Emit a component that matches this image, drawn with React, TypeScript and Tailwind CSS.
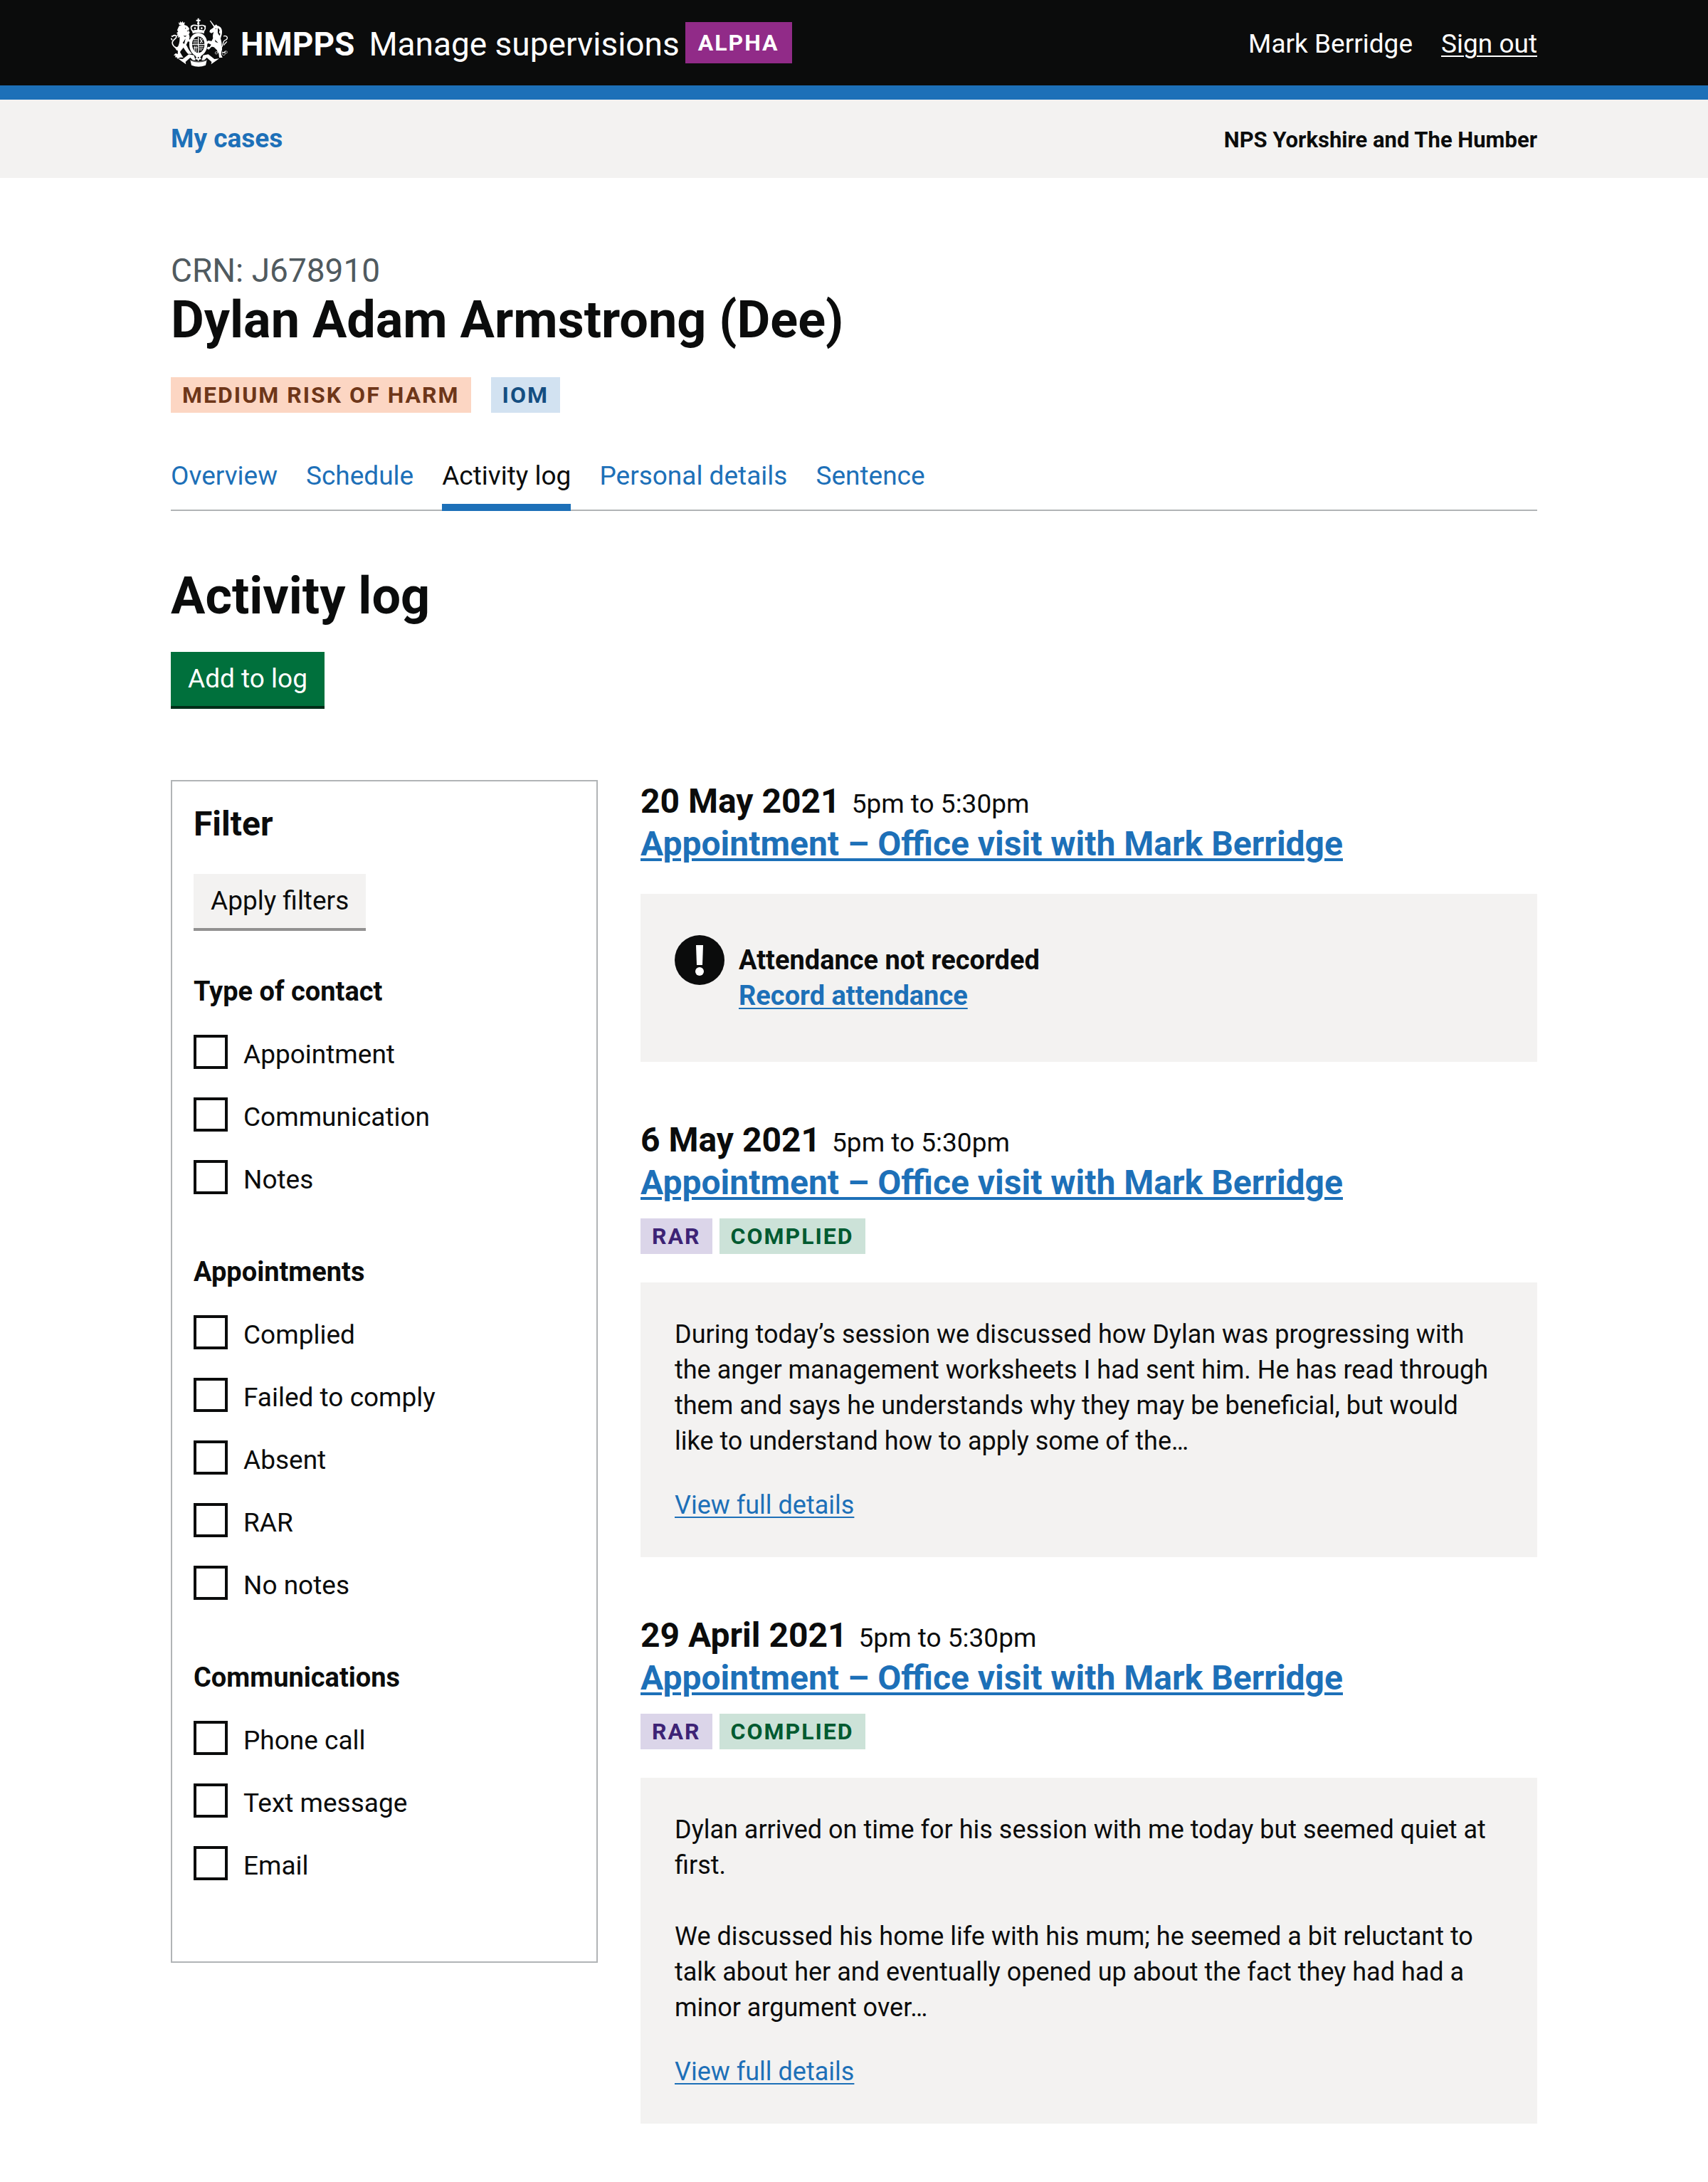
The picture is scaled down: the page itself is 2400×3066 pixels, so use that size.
import type { ReactNode } from 'react';

const tagColours = {
  orange: 'bg-[#fcd6c3] text-[#6e3619]',
  blue: 'bg-[#d2e2f1] text-[#144e81]',
  purple: 'bg-[#dbd5e9] text-[#3d2375]',
  green: 'bg-[#cce2d8] text-[#005a30]',
};

type TagColour = keyof typeof tagColours;

function Tag({ colour, children }: { colour: TagColour; children: ReactNode }) {
  return (
    <strong
      className={`${tagColours[colour]} inline-block px-4 text-[32px] leading-[50px] font-bold tracking-[2px] whitespace-nowrap uppercase`}
    >
      {children}
    </strong>
  );
}

function Crest() {
  return (
    <svg viewBox="30 24 240 210" className="h-[70px] w-20 shrink-0" fill="#fff" aria-hidden="true">
      {/* Crown */}
      <path d="M143 26h6v6h6v6h-6v7h-6v-7h-6v-6h6z" />
      <circle cx="146" cy="48" r="5" />
      <path
        d="M124 82c-8-8-12-18-5-24 8-6 18-2 26 0 10-2 20-6 27 1 6 7 2 16-5 23"
        fill="none"
        stroke="#fff"
        strokeWidth="5"
      />
      <path d="M144 52h4l3 28h-10z" />
      <g>
        <circle cx="118" cy="60" r="4" />
        <circle cx="174" cy="60" r="4" />
        <circle cx="132" cy="68" r="4" />
        <circle cx="160" cy="68" r="4" />
      </g>
      <path d="M120 78q26-8 52 0l-2 12q-24-7-48 0z" />
      {/* Garter and shield */}
      <path
        fillRule="evenodd"
        d="M146 88c22 0 38 20 38 48s-16 50-38 50-38-22-38-50 16-48 38-48zm0 15c-15 0-26 14-26 33s11 36 26 36 26-16 26-36-11-33-26-33z"
      />
      <g stroke="#fff" fill="none">
        <path d="M146 104v68M121 137h50" strokeWidth="4" />
        <path d="M126 116h17M125 123h18M124 130h19M149 145h19M149 152h17M149 159h13" strokeWidth="3" />
        <path d="M152 111l14 20M166 113l-13 18M157 108v24M130 143v20M137 143v26M126 150h17" strokeWidth="3" />
      </g>
      {/* Lion */}
      <path d="M62 42l5 5 3-8 5 6 5-7 3 8 6-4-2 13H66z" />
      <path d="M64 60c8-8 26-8 36-1l8 10-3 10 5 6-4 9c4 8 4 14 1 20l12 6-3 7-14-3-7 14c6 10 10 22 18 30l6 8h-16c-9-9-14-18-20-27-5 8-10 12-14 20l8 14 6 8H66c-5-9-8-18-6-28-8-2-12-10-11-19 6 6 10 4 13-3 5-12 6-24 5-37l-8 5 3-9-8 1 5-9-5-4 7-5-4-7z" />
      <path
        d="M52 152c-10-8-18-15-15-26 3-10 13-12 16-20 2-8-6-11-16-4M36 118l-5-8M38 104l-5-4"
        fill="none"
        stroke="#fff"
        strokeWidth="5"
      />
      <path d="M66 178l-16-4-8 8 9 2-4 6 10 1-1 6 14-6z" />
      <g fill="#0b0c0c">
        <circle cx="92" cy="68" r="2" />
        <path d="M98 78l9-1-7 5zM82 98q8 4 16 0l-8 7zM80 130l12-18-5 22z" />
      </g>
      {/* Unicorn */}
      <path d="M194 36l4 0 20 26-5 3z" />
      <path d="M214 58l8-6 4 6c14 2 20 12 20 24 1 12-4 20-6 30 4 12 6 24 4 34 4 8 2 14 0 18l-2 14 6 14h-14l-2-18-8-14-12-12c-6-2-10-3-14 2l-8 8-8-4 4-8 8 1 6-10-12-6-12 10-6-7 8-6 10-8 14 2 6-12c-2-10 0-18 3-26l-10 5-8-5 2-8 14-10z" />
      <path
        d="M243 150c8-10 6-18 10-26 5-9 14-5 15-14 1-8-8-12-16-8M266 124c-4 8-10 8-12 16M246 168c6 4 12 2 14-4"
        fill="none"
        stroke="#fff"
        strokeWidth="4"
      />
      <g fill="none" stroke="#fff" strokeWidth="2">
        <circle cx="222" cy="172" r="5" />
        <circle cx="232" cy="166" r="5" />
        <circle cx="253" cy="176" r="6" />
        <circle cx="263" cy="169" r="5" />
      </g>
      <g fill="#0b0c0c">
        <circle cx="220" cy="70" r="2" />
        <path d="M228 66l8 10-3 10 6 6-4 8-7-12zM216 116l14 14-12-4z" />
      </g>
      {/* Motto ribbon */}
      <path d="M60 196l20 2 26-20 22 4 6 22-12-2-10-10-20 18 2 10-14-10z" />
      <path d="M234 196l-20 2-26-20-22 4-6 22 12-2 10-10 20 18-2 10 14-10z" />
      <path d="M112 202q34 14 70 0l-5 22q-30 12-60 0z" />
      <path d="M146 176l6 8 8-2-6 10 6 6-10 2-4 8-4-8-10-2 6-6-6-10 8 2z" />
      <path d="M114 204q32 13 66 0" fill="none" stroke="#0b0c0c" strokeWidth="2" />
      <circle cx="146" cy="192" r="3" fill="#0b0c0c" />
    </svg>
  );
}

function WarningIcon() {
  return (
    <svg viewBox="0 0 70 70" className="mt-2.5 size-[70px] shrink-0" role="img" aria-label="Warning">
      <circle cx="35" cy="35" r="35" fill="#0b0c0c" />
      <path d="M30 14h10l-1 28h-8z" fill="#fff" />
      <circle cx="35" cy="51" r="6" fill="#fff" />
    </svg>
  );
}

function Header() {
  return (
    <header className="border-b-20 border-[#1d70b8] bg-[#0b0c0c] text-white">
      <div className="mx-auto flex h-[120px] w-full max-w-[1920px] items-center justify-between">
        <div className="flex items-center">
          <a href="#home" className="flex items-center">
            <Crest />
            <span className="ml-[18px] pt-1 text-[46px] leading-[60px] font-bold">HMPPS</span>
            <span className="ml-5 pt-1 text-[46px] leading-[60px]">Manage supervisions</span>
          </a>
          <strong className="ml-2 bg-[#912b88] px-[18px] text-[32px] leading-[58px] font-bold tracking-[2px]">
            ALPHA
          </strong>
        </div>
        <div className="flex gap-10 pt-1 text-[37px] leading-[50px]">
          <span>Mark Berridge</span>
          <a href="#sign-out" className="underline decoration-2 underline-offset-4">
            Sign out
          </a>
        </div>
      </div>
    </header>
  );
}

function PrimaryNav() {
  return (
    <nav aria-label="Primary" className="bg-[#f3f2f1]">
      <div className="mx-auto flex w-full max-w-[1920px] items-baseline justify-between py-[30px] font-bold">
        <a href="#cases" className="text-[37px] leading-[50px] text-[#1d70b8]">
          My cases
        </a>
        <span className="text-[31px] leading-10">NPS Yorkshire and The Humber</span>
      </div>
    </nav>
  );
}

const tabs = ['Overview', 'Schedule', 'Activity log', 'Personal details', 'Sentence'];

function Tabs() {
  return (
    <nav aria-label="Case" className="mt-16 border-b-2 border-[#b1b4b6]">
      <ul className="-mb-0.5 flex gap-10 text-[37px] leading-[50px]">
        {tabs.map((tab) => {
          const current = tab === 'Activity log';
          return (
            <li key={tab}>
              <a
                href={`#${tab.toLowerCase().replace(' ', '-')}`}
                aria-current={current ? 'page' : undefined}
                className={`block border-b-10 pb-3.5 ${current ? 'border-[#1d70b8] text-[#0b0c0c]' : 'border-transparent text-[#1d70b8]'}`}
              >
                {tab}
              </a>
            </li>
          );
        })}
      </ul>
    </nav>
  );
}

const filterGroups = [
  { title: 'Type of contact', options: ['Appointment', 'Communication', 'Notes'] },
  { title: 'Appointments', options: ['Complied', 'Failed to comply', 'Absent', 'RAR', 'No notes'] },
  { title: 'Communications', options: ['Phone call', 'Text message', 'Email'] },
];

function Filter() {
  return (
    <form className="self-start border-2 border-[#b1b4b6] px-[30px] pt-[30px] pb-[110px]">
      <h3 className="text-[48px] leading-[60px] font-bold">Filter</h3>
      <button
        type="button"
        className="mt-10 mb-[60px] block border-b-4 border-[#929191] bg-[#f3f2f1] px-6 text-[37px] leading-[76px]"
      >
        Apply filters
      </button>
      <div className="flex flex-col gap-20">
        {filterGroups.map((group) => (
          <fieldset key={group.title}>
            <legend className="mb-9 text-[38px] leading-[50px] font-bold">{group.title}</legend>
            <div className="flex flex-col gap-9">
              {group.options.map((option) => {
                const id = `${group.title}-${option}`.toLowerCase().replaceAll(' ', '-');
                return (
                  <div key={option} className="flex items-start gap-[22px]">
                    <input
                      id={id}
                      type="checkbox"
                      className="size-12 shrink-0 appearance-none border-4 border-[#0b0c0c] bg-white checked:bg-[#0b0c0c]"
                    />
                    <label htmlFor={id} className="pt-1 text-[37px] leading-[48px]">
                      {option}
                    </label>
                  </div>
                );
              })}
            </div>
          </fieldset>
        ))}
      </div>
    </form>
  );
}

type EntryProps = { date: string; tags?: [TagColour, string][]; children: ReactNode };

function Entry({ date, tags, children }: EntryProps) {
  return (
    <article>
      <h3 className="text-[48px] leading-[60px] font-bold">
        <span className="flex items-baseline gap-4">
          {date}
          <span className="text-[37px] leading-10 font-normal">5pm to 5:30pm</span>
        </span>
        <a href="#appointment" className="text-[#1d70b8] underline decoration-4 underline-offset-4">
          Appointment – Office visit with Mark Berridge
        </a>
      </h3>
      {tags && (
        <div className="mt-5 flex gap-2.5">
          {tags.map(([colour, text]) => (
            <Tag key={text} colour={colour}>
              {text}
            </Tag>
          ))}
        </div>
      )}
      <div className="mt-10 bg-[#f3f2f1] p-12 text-[36px] leading-[50px]">{children}</div>
    </article>
  );
}

function DetailsLink() {
  return (
    <a href="#details" className="mt-10 block w-fit text-[#1d70b8] underline decoration-2 underline-offset-4">
      View full details
    </a>
  );
}

const sessionTags: [TagColour, string][] = [
  ['purple', 'RAR'],
  ['green', 'Complied'],
];

export default function App() {
  return (
    <div className="min-h-screen bg-white font-['Roboto',sans-serif] text-[#0b0c0c]">
      <Header />
      <PrimaryNav />
      <main className="mx-auto w-full max-w-[1920px] pt-[100px] pb-20">
        <p className="text-[46px] leading-[60px] text-[#505a5f]">CRN: J678910</p>
        <h1 className="text-[72px] leading-[80px] font-bold">Dylan Adam Armstrong (Dee)</h1>
        <div className="mt-10 flex gap-7">
          <Tag colour="orange">Medium risk of harm</Tag>
          <Tag colour="blue">IOM</Tag>
        </div>
        <Tabs />
        <h2 className="mt-20 text-[72px] leading-[80px] font-bold">Activity log</h2>
        <button
          type="button"
          className="mt-[38px] block border-b-4 border-[#002d18] bg-[#00703c] px-6 text-[37px] leading-[76px] text-white"
        >
          Add to log
        </button>

        <div className="mt-[100px] grid grid-cols-[10fr_21fr] gap-[60px]">
          <Filter />
          <section aria-label="Entries" className="flex flex-col gap-20">
            <Entry date="20 May 2021">
              <div className="flex items-start gap-5">
                <WarningIcon />
                <div className="py-5 text-[38px] font-bold">
                  <p>Attendance not recorded</p>
                  <a href="#record" className="block w-fit text-[#1d70b8] underline decoration-2 underline-offset-4">
                    Record attendance
                  </a>
                </div>
              </div>
            </Entry>
            <Entry date="6 May 2021" tags={sessionTags}>
              <p>
                During today’s session we discussed how Dylan was progressing with the anger management worksheets I had
                sent him. He has read through them and says he understands why they may be beneficial, but would like to
                understand how to apply some of the…
              </p>
              <DetailsLink />
            </Entry>
            <Entry date="29 April 2021" tags={sessionTags}>
              <p>Dylan arrived on time for his session with me today but seemed quiet at first.</p>
              <p className="mt-[50px]">
                We discussed his home life with his mum; he seemed a bit reluctant to talk about her and eventually
                opened up about the fact they had had a minor argument over…
              </p>
              <DetailsLink />
            </Entry>
          </section>
        </div>
      </main>
    </div>
  );
}
